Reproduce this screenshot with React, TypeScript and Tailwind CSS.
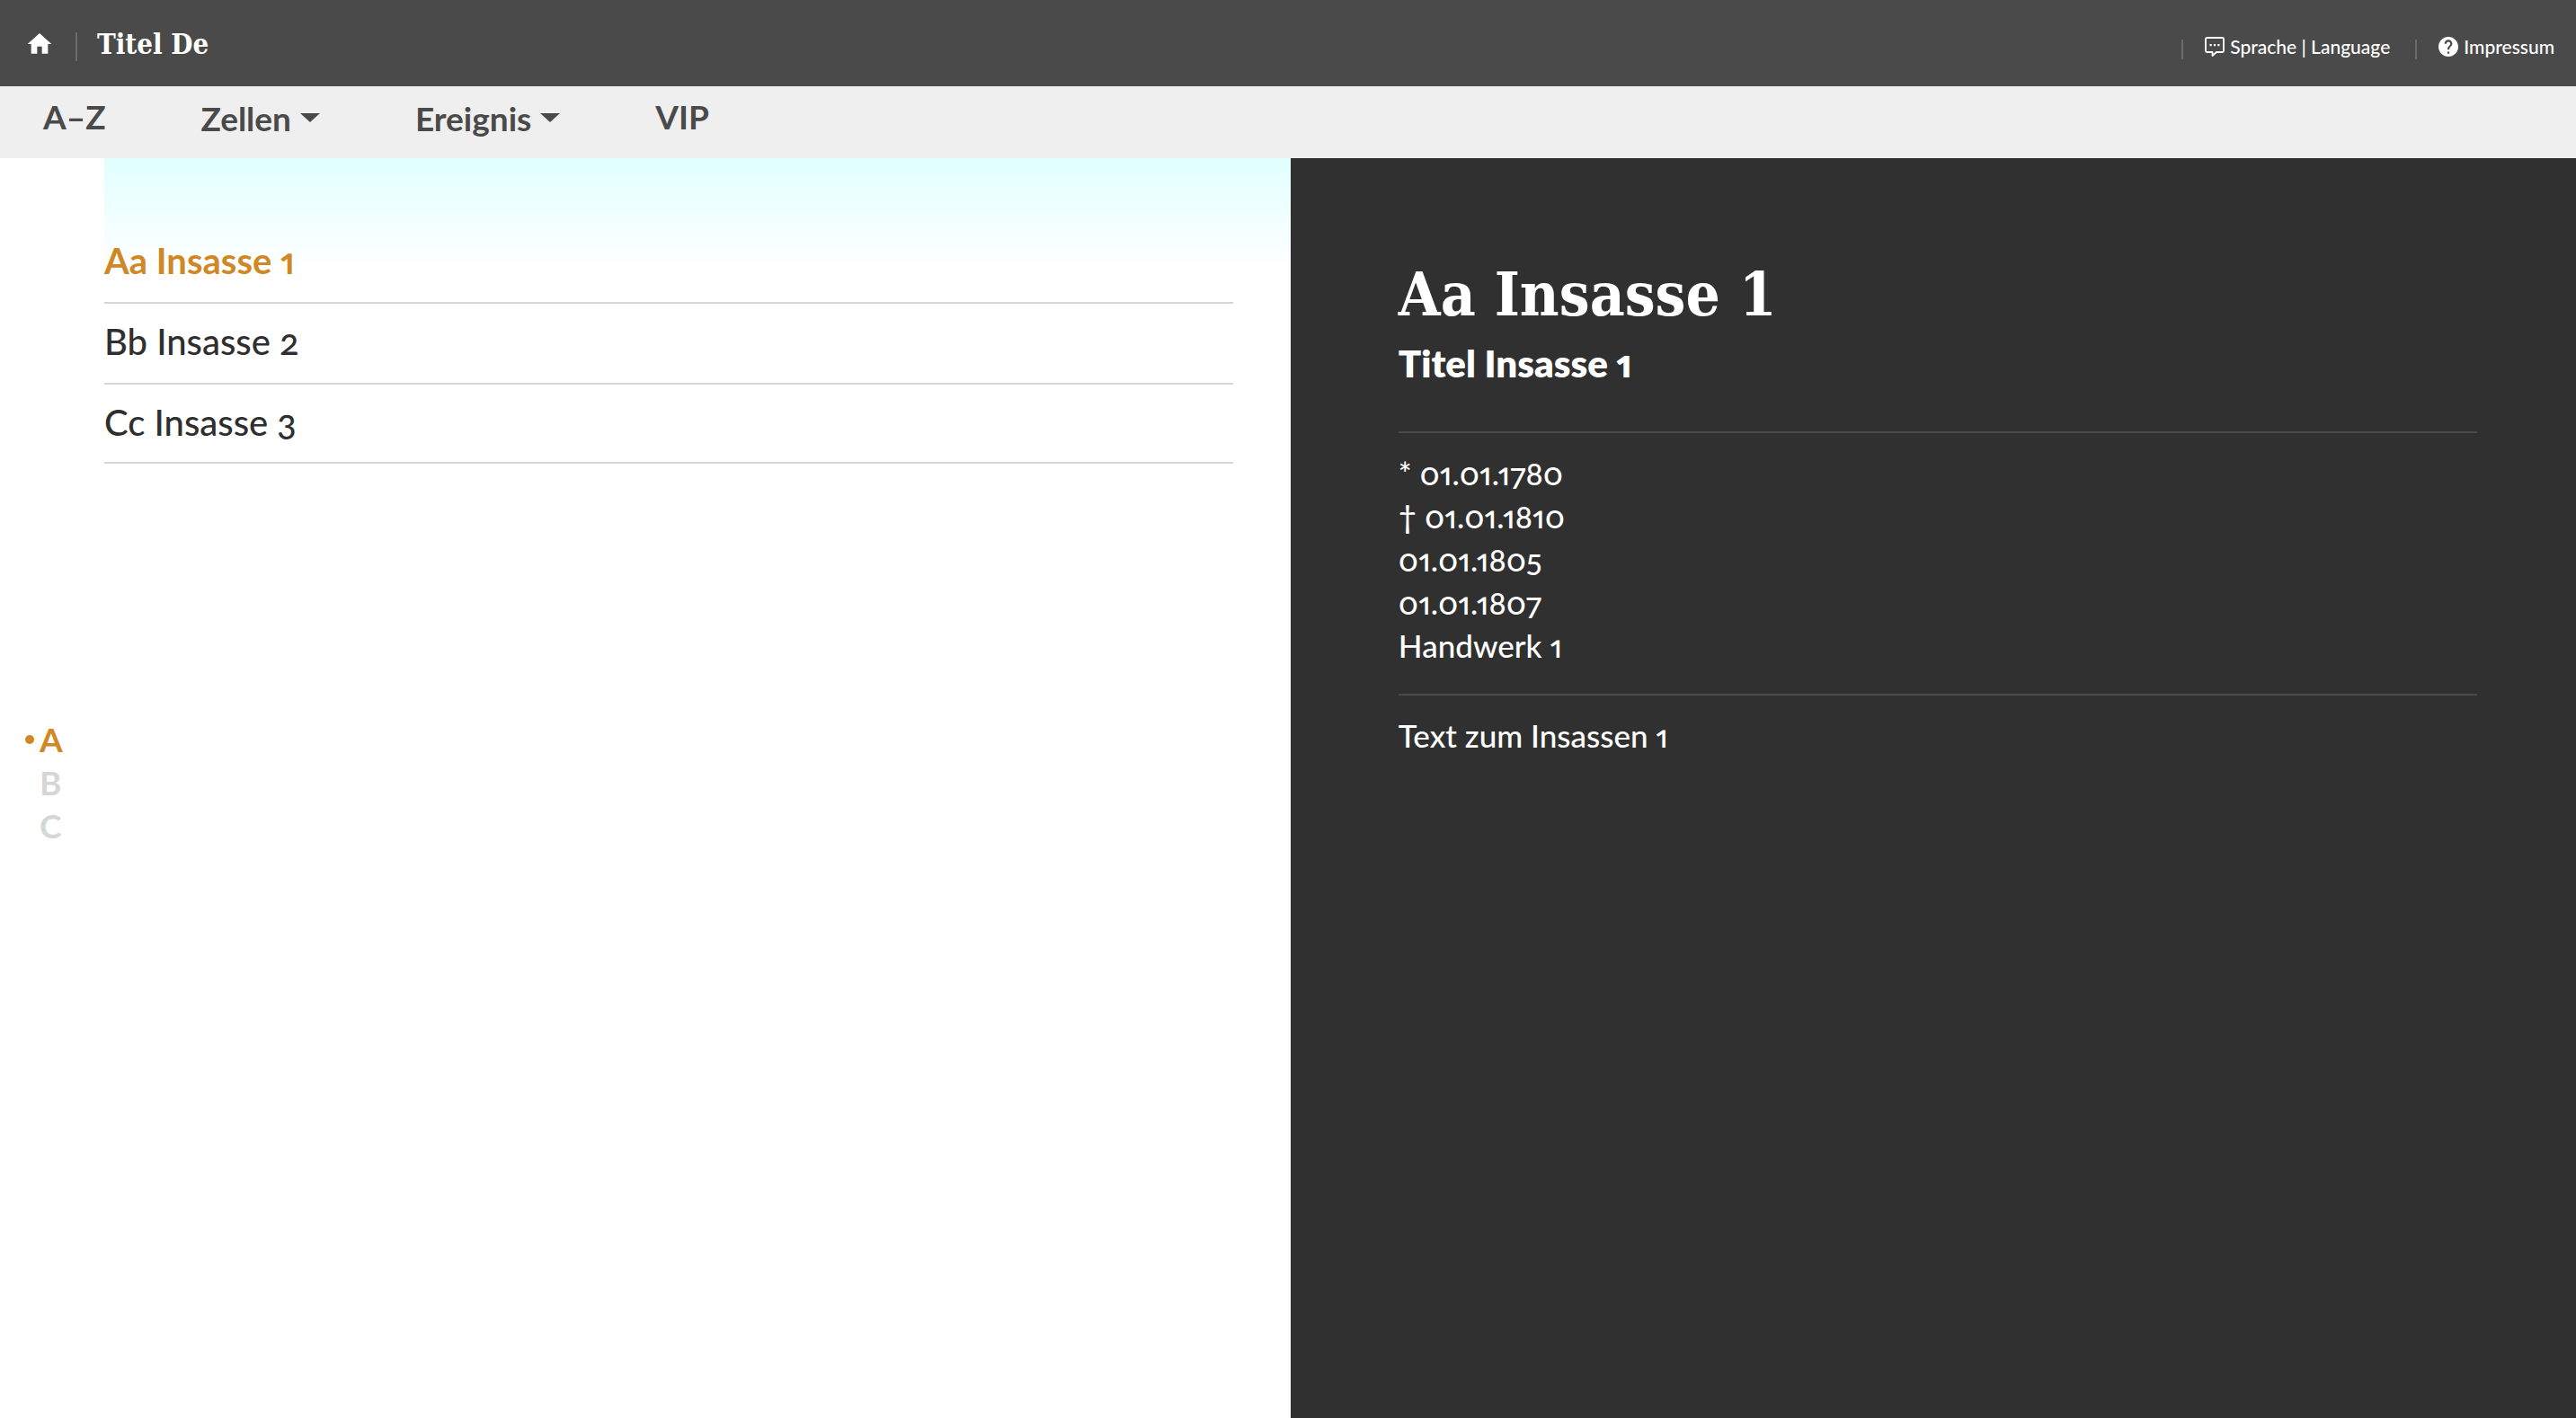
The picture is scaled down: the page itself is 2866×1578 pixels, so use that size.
import type { ReactNode } from "react";

const inmates = [
  { name: "Aa Insasse 1", active: true },
  { name: "Bb Insasse 2", active: false },
  { name: "Cc Insasse 3", active: false },
];

const letters = [
  { label: "A", active: true },
  { label: "B", active: false },
  { label: "C", active: false },
];

const facts = ["* 01.01.1780", "† 01.01.1810", "01.01.1805", "01.01.1807", "Handwerk 1"];

function HomeIcon() {
  return (
    <svg viewBox="0 0 24 24" className="size-8" fill="currentColor" aria-hidden="true">
      <path d="M10 20v-6h4v6h5v-8h3L12 3 2 12h3v8z" />
    </svg>
  );
}

function SpeechIcon() {
  return (
    <svg viewBox="0 0 22 22" className="size-[22px]" aria-hidden="true">
      <path
        d="M2.5 1h17A1.5 1.5 0 0 1 21 2.500v13a1.500 1.500 0 0 1-1.500 1.500h-6.500L8.500 21v-4h-6A1.500 1.500 0 0 1 1 15.500v-13A1.500 1.500 0 0 1 2.500 1z"
        fill="none"
        stroke="currentColor"
        strokeWidth="1.800"
        strokeLinejoin="round"
      />
      <path d="M5.500 8h2.200v2.200H5.500zM9.900 8h2.200v2.200H9.900zM14.300 8h2.200v2.200h-2.200z" fill="currentColor" />
    </svg>
  );
}

function HelpIcon() {
  return (
    <svg viewBox="2 2 20 20" className="size-[22px]" fill="currentColor" aria-hidden="true">
      <path d="M12 2C6.480 2 2 6.480 2 12s4.480 10 10 10 10-4.480 10-10S17.520 2 12 2zm1 17h-2v-2h2v2zm2.070-7.750-.9.920C13.450 12.900 13 13.500 13 15h-2v-.5c0-1.100.450-2.100 1.170-2.830l1.240-1.260c.370-.360.590-.860.590-1.410 0-1.100-.9-2-2-2s-2 .9-2 2H8c0-2.210 1.790-4 4-4s4 1.790 4 4c0 .880-.360 1.680-.930 2.250z" />
    </svg>
  );
}

function DropdownItem({ children }: { children: ReactNode }) {
  return (
    <button type="button" className="flex items-center gap-2.5 pt-0.5 font-bold">
      {children}
      <svg viewBox="0 0 22 10" className="mb-0.5 h-2.5 w-[22px]" fill="currentColor" aria-hidden="true">
        <path d="M0 0h22L11 10z" />
      </svg>
    </button>
  );
}

export default function App() {
  return (
    <div className="flex min-h-screen flex-col bg-white font-['Lato',sans-serif] oldstyle-nums proportional-nums">
      <header className="flex h-24 items-center justify-between bg-[#4a4a4a] pr-6 pl-7 text-white">
        <div className="flex items-end pt-0.5">
          <a href="#home" aria-label="Home" className="flex h-[38px] items-center">
            <HomeIcon />
          </a>
          <span className="ml-6 h-8 w-0.5 bg-[#6b6b6b]" />
          <span className="ml-[22px] font-['DejaVu_Serif_Condensed','DejaVu_Serif',serif] text-[31px] leading-[38px] font-bold">
            Titel De
          </span>
        </div>
        <div className="flex items-end pt-2 text-[21px] leading-7 font-medium">
          <span className="h-[22px] w-0.5 bg-[#6b6b6b]" />
          <button type="button" className="ml-6 flex items-center gap-1.5">
            <SpeechIcon />
            Sprache | Language
          </button>
          <span className="ml-7 h-[22px] w-0.5 bg-[#6b6b6b]" />
          <a href="#impressum" className="ml-6 flex items-center gap-1.5">
            <HelpIcon />
            Impressum
          </a>
        </div>
      </header>

      <nav className="flex h-20 items-start gap-[106px] bg-[#efefef] pt-2.5 pl-12 text-[37px] leading-[48px] font-bold text-[#4a4a4a]">
        <a href="#a-z">A–Z</a>
        <DropdownItem>Zellen</DropdownItem>
        <DropdownItem>Ereignis</DropdownItem>
        <a href="#vip">VIP</a>
      </nav>

      <main className="flex grow">
        <section className="flex w-[50.1%]">
          <ul className="flex w-[116px] flex-col justify-center pb-3 pl-7 text-[37px] leading-[48px] font-bold">
            {letters.map((l) => (
              <li key={l.label}>
                <a
                  href={"#" + l.label}
                  className={l.active ? "flex items-center gap-1.5 text-[#cf8825]" : "flex items-center gap-1.5 text-[#d6d6d6]"}
                >
                  <span className={l.active ? "size-2.5 rounded-full bg-[#cf8825]" : "size-2.5"} />
                  {l.label}
                </a>
              </li>
            ))}
          </ul>
          <div className="grow bg-linear-to-b from-[#e0ffff] to-white to-[124px] pt-[72px] pr-16">
            <ul className="text-[40px]">
              {inmates.map((p) => (
                <li key={p.name} className="border-b-2 border-[#d6d6d6] pb-1 last:pb-0.5">
                  <a
                    href="#insasse"
                    className={
                      p.active
                        ? "block leading-[84px] font-bold text-[#cf8825]"
                        : "block leading-[84px] font-medium text-[#2f2f2f]"
                    }
                  >
                    {p.name}
                  </a>
                </li>
              ))}
            </ul>
          </div>
        </section>

        <article className="grow bg-[#303030] pt-28 pr-[110px] pl-[120px] text-white">
          <div className="border-b-2 border-[#4a4a4a] pb-12">
            <h1 className="font-['DejaVu_Serif_Condensed','DejaVu_Serif',serif] text-[67px] leading-[80px] font-bold">
              Aa Insasse 1
            </h1>
            <h2 className="mt-2 text-[42px] leading-[56px] font-extrabold">Titel Insasse 1</h2>
          </div>
          <ul className="border-b-2 border-[#4a4a4a] pt-5 pb-[30px] text-[35px] leading-[48px] font-medium">
            {facts.map((f) => (
              <li key={f}>{f}</li>
            ))}
          </ul>
          <p className="pt-5 text-[35px] leading-[48px] font-medium">Text zum Insassen 1</p>
        </article>
      </main>
    </div>
  );
}
